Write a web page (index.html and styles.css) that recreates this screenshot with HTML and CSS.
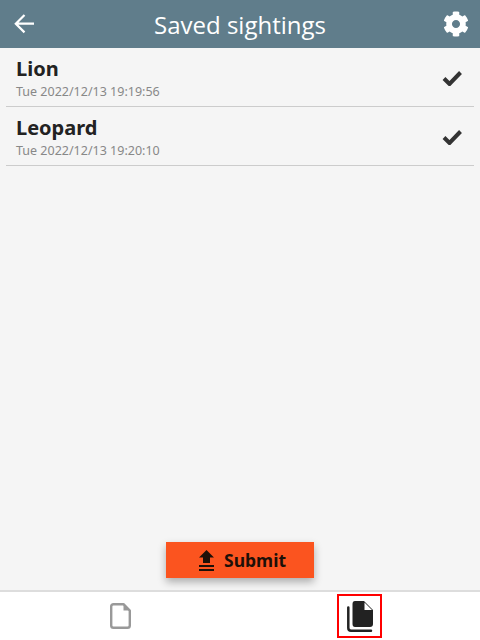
FILE: index.html
```html
<!DOCTYPE html>
<html lang="en">
<head>
    <meta charset="UTF-8">
    <meta name="viewport" content="width=device-width, initial-scale=1.0">
    <title>Saved sightings</title>
    <link rel="stylesheet" href="styles.css">
</head>
<body>
    <header class="top-bar">
        <a class="top-btn" href="#">
            <svg width="24" height="24" viewBox="0 0 24 24" fill="none" stroke="#fff" stroke-width="2.2">
                <path d="M2.800 11.700H21M11.500 3L2.800 11.700L11.500 20.400"/>
            </svg>
        </a>
        <h1>Saved sightings</h1>
        <a class="top-btn" href="#">
            <svg width="26" height="26" viewBox="0 0 512 512" fill="#fff">
                <path d="M487.4 315.7l-42.6-24.6c4.300-23.200 4.300-47 0-70.200l42.600-24.600c4.900-2.800 7.100-8.600 5.500-14-11.100-35.600-30-67.800-54.700-94.600-3.800-4.100-10-5.100-14.800-2.300L380.800 110c-17.900-15.400-38.500-27.300-60.800-35.100V25.800c0-5.600-3.900-10.500-9.400-11.700-36.700-8.200-74.300-7.800-109.200 0-5.500 1.200-9.400 6.100-9.400 11.700V75c-22.200 7.900-42.800 19.800-60.800 35.100L88.700 85.500c-4.900-2.800-11-1.900-14.800 2.300-24.700 26.700-43.600 58.900-54.700 94.600-1.700 5.400.6 11.200 5.500 14L67.300 221c-4.300 23.200-4.300 47 0 70.200l-42.600 24.600c-4.900 2.800-7.100 8.600-5.500 14 11.100 35.600 30 67.800 54.700 94.600 3.800 4.100 10 5.100 14.800 2.300l42.600-24.600c17.900 15.400 38.500 27.300 60.800 35.100v49.200c0 5.600 3.900 10.500 9.400 11.700 36.700 8.200 74.300 7.800 109.200 0 5.500-1.200 9.400-6.100 9.400-11.700v-49.200c22.200-7.900 42.800-19.800 60.800-35.100l42.600 24.600c4.900 2.800 11 1.900 14.800-2.300 24.700-26.700 43.600-58.900 54.700-94.600 1.500-5.500-.7-11.300-5.600-14.100zM256 336c-44.100 0-80-35.900-80-80s35.900-80 80-80 80 35.900 80 80-35.900 80-80 80z"/>
            </svg>
        </a>
    </header>

    <ul class="sighting-list">
        <li>
            <div>
                <div class="sighting-name">Lion</div>
                <div class="sighting-date">Tue 2022/12/13 19:19:56</div>
            </div>
            <svg class="check" width="20" height="16" viewBox="0 0 20 16" fill="none" stroke="#333" stroke-width="4">
                <path d="M2 8.500L7.500 14L18.500 2.500"/>
            </svg>
        </li>
        <li>
            <div>
                <div class="sighting-name">Leopard</div>
                <div class="sighting-date">Tue 2022/12/13 19:20:10</div>
            </div>
            <svg class="check" width="20" height="16" viewBox="0 0 20 16" fill="none" stroke="#333" stroke-width="4">
                <path d="M2 8.500L7.500 14L18.500 2.500"/>
            </svg>
        </li>
    </ul>

    <div class="submit-row">
        <button class="submit-btn" type="button">
            <svg width="15" height="21" viewBox="0 0 15 21" fill="#1d1008">
                <path d="M7.500 0L15 7.500H11V13H4V7.500H0zM0 15H15V17H0zM0 19H15V21H0z"/>
            </svg>
            Submit
        </button>
    </div>

    <nav class="bottom-nav">
        <a class="tab" href="#">
            <svg width="21" height="26" viewBox="0 0 21 26">
                <path d="M13.500 1.200H3.500Q1.200 1.200 1.200 3.500V22.500Q1.200 24.800 3.500 24.800H17.500Q19.800 24.800 19.800 22.500V7.500z" fill="#fff" stroke="#999" stroke-width="2.400" stroke-linejoin="round"/>
                <path d="M13.500 1.200V7.500H19.800z" fill="#999"/>
            </svg>
        </a>
        <a class="tab" href="#">
            <span class="tab-frame">
                <svg width="26" height="31" viewBox="0 0 26 31">
                    <path d="M1.300 6.500V27Q1.300 29.700 4 29.700H24" fill="none" stroke="#222" stroke-width="2.500" stroke-linecap="round"/>
                    <path d="M8 0H17L26 9V23Q26 26 23 26H8Q5.500 26 5.500 23V3Q5.500 0 8 0z" fill="#222"/>
                    <path d="M17.500 1.500V9H25z" fill="#fff"/>
                </svg>
            </span>
        </a>
    </nav>
</body>
</html>
```

FILE: styles.css
```css
/* General Styles */
html, body {
    height: 100%;
}

body {
    font-family: "Noto Sans", sans-serif;
    margin: 0;
    background-color: #f5f5f5;
    color: #222;
    display: flex;
    flex-direction: column;
}

.top-bar {
    background-color: #607d8b;
    color: white;
    height: 48px;
    flex: none;
    display: flex;
    justify-content: space-between;
    align-items: center;
    padding: 0 11px 0 13px;
}

.top-bar h1 {
    font-family: "Open Sans", sans-serif;
    font-size: 24px;
    font-weight: 400;
    margin: 0;
}

.top-btn {
    display: flex;
}

.sighting-list {
    list-style-type: none;
    margin: 0;
    padding: 0 6px;
    flex: 1;
}

.sighting-list li {
    display: flex;
    justify-content: space-between;
    align-items: center;
    height: 58px;
    padding: 0 12px 0 10px;
    border-bottom: 1px solid #ccc;
}

.check {
    margin-top: 1px;
}

.sighting-name {
    font-size: 20px;
    font-weight: bold;
    line-height: 24px;
    margin-top: 3px;
}

.sighting-date {
    font-size: 12.5px;
    color: #888;
    line-height: 16px;
    margin-top: 3px;
}

.submit-row {
    display: flex;
    justify-content: center;
    padding-bottom: 12px;
    flex: none;
}

.submit-btn {
    background-color: #fb541f;
    color: #1d1008;
    border: none;
    width: 148px;
    height: 36px;
    padding: 0 0 0 5px;
    font-family: inherit;
    font-size: 17.5px;
    font-weight: bold;
    display: flex;
    justify-content: center;
    align-items: center;
    gap: 10px;
    box-shadow: 0 4px 8px rgba(0, 0, 0, 0.3);
}

.bottom-nav {
    background-color: white;
    border-top: 2px solid #ddd;
    height: 48px;
    flex: none;
    display: flex;
}

.tab {
    flex: 1;
    display: flex;
    justify-content: center;
    align-items: center;
}

.tab-frame {
    width: 45px;
    height: 44px;
    box-sizing: border-box;
    margin-right: 1px;
    padding-left: 1px;
    border: 2px solid #f00;
    display: flex;
    justify-content: center;
    align-items: center;
}
```
